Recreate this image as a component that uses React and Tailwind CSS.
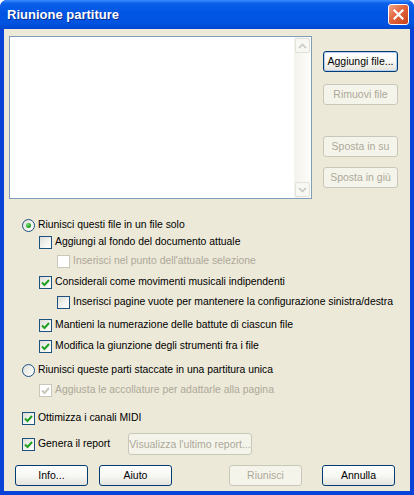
import React from "react";
import clsx from "clsx";

const font = "font-['Liberation_Sans',Arial,sans-serif]";

const Btn = ({ children, disabled, focused, className }) => (
  <div
    className={clsx(
      "h-[21px] w-[73px] flex items-center justify-center rounded-[3px] border text-[10.5px] leading-none",
      disabled
        ? "border-[#C9C7BA] bg-[#F5F4EA] text-[#ACA899]"
        : "border-[#003C74] bg-[linear-gradient(180deg,#FFFFFF_0%,#F6F6F2_55%,#E4E3DC_100%)] text-black",
      focused && "shadow-[inset_0_0_0_1px_#B5CDF0]",
      className
    )}
  >
    {children}
  </div>
);

const Check = ({ checked, disabled }) => (
  <div
    className={clsx(
      "w-[13px] h-[13px] shrink-0 border flex items-center justify-center",
      disabled
        ? "border-[#CAC8BB] bg-white"
        : "border-[#1C5180] bg-[linear-gradient(135deg,#DCDCD7_0%,#F4F4F1_60%,#FFFFFF_100%)]"
    )}
  >
    {checked && (
      <svg width="11" height="11" viewBox="0 0 11 11">
        <polyline
          points="2,5.5 4.5,8 9,3"
          fill="none"
          stroke={disabled ? "#CAC8BB" : "#21A121"}
          strokeWidth="2"
        />
      </svg>
    )}
  </div>
);

const Radio = ({ checked }) => (
  <div className="w-[13px] h-[13px] shrink-0 rounded-full border border-[#1C5180] bg-[linear-gradient(135deg,#DCDCD7_0%,#F4F4F1_60%,#FFFFFF_100%)] flex items-center justify-center">
    {checked && (
      <div className="w-[5px] h-[5px] rounded-full bg-[radial-gradient(circle_at_35%_35%,#7BE07B_0%,#21A121_60%,#1A8A1A_100%)]" />
    )}
  </div>
);

const Row = ({ indent, control, label, disabled, className }) => (
  <div className={clsx("h-[16px] flex items-center", indent, className)}>
    {control}
    <span
      className={clsx(
        "ml-[3px] text-[10.4px] whitespace-nowrap",
        disabled ? "text-[#ACA899]" : "text-black"
      )}
    >
      {label}
    </span>
  </div>
);

const Chevron = ({ up }) => (
  <svg width="9" height="6" viewBox="0 0 9 6">
    <polyline
      points={up ? "1,5 4.5,1.5 8,5" : "1,1 4.5,4.5 8,1"}
      fill="none"
      stroke="#C9C8C0"
      strokeWidth="1.6"
    />
  </svg>
);

export default function App() {
  return (
    <div className={clsx("w-[414px] h-[495px] flex flex-col rounded-t-[7px] bg-[#0842D6] overflow-hidden", font)}>
      {/* title bar */}
      <div className="h-[29px] shrink-0 flex items-center justify-between pl-[7px] pr-[5px] bg-[linear-gradient(180deg,#3A8CFF_0%,#0A5FEA_12%,#0055E3_45%,#0054E0_80%,#0045CF_100%)]">
        <span className="text-white text-[13px] font-bold [text-shadow:1px_1px_0_#0A2D8C]">
          Riunione partiture
        </span>
        <div className="w-[21px] h-[21px] rounded-[3px] border border-white bg-[linear-gradient(135deg,#F0A88A_0%,#E2643D_45%,#C7411B_100%)] flex items-center justify-center">
          <svg width="11" height="11" viewBox="0 0 11 11">
            <path d="M1.5 1.5 L9.5 9.5 M9.5 1.5 L1.5 9.5" stroke="white" strokeWidth="2.2" strokeLinecap="square" />
          </svg>
        </div>
      </div>

      {/* client */}
      <div className="flex-1 mx-[4px] mb-[4px] bg-[#ECE9D8] pt-[7px] pl-[5px] flex flex-col">
        <div className="flex">
          <div className="w-[303px] h-[163px] border border-[#7F9DB9] bg-white flex justify-end">
            <div className="w-[17px] h-full flex flex-col justify-between bg-[linear-gradient(90deg,#F3F2EC_0%,#FDFDFA_100%)] p-[1px]">
              <div className="h-[15px] rounded-[2px] border border-[#E2E1DA] bg-[#F7F7F3] flex items-center justify-center">
                <Chevron up />
              </div>
              <div className="h-[15px] rounded-[2px] border border-[#E2E1DA] bg-[#F7F7F3] flex items-center justify-center">
                <Chevron />
              </div>
            </div>
          </div>
          <div className="ml-[11px] mt-[15px] flex flex-col">
            <Btn focused className="w-[75px]">Aggiungi file...</Btn>
            <Btn disabled className="w-[75px] mt-[12px]">Rimuovi file</Btn>
            <Btn disabled className="w-[75px] mt-[31px]">Sposta in su</Btn>
            <Btn disabled className="w-[75px] mt-[10px]">Sposta in giù</Btn>
          </div>
        </div>

        <div className="flex flex-col mt-[18px]">
          <Row indent="pl-[13px]" control={<Radio checked />} label="Riunisci questi file in un file solo" />
          <Row indent="pl-[30px] mt-[1px]" control={<Check />} label="Aggiungi al fondo del documento attuale" />
          <Row indent="pl-[48px] mt-[3px]" control={<Check disabled />} label="Inserisci nel punto dell'attuale selezione" disabled />
          <Row indent="pl-[30px] mt-[5px]" control={<Check checked />} label="Considerali come movimenti musicali indipendenti" />
          <Row indent="pl-[48px] mt-[4px]" control={<Check />} label="Inserisci pagine vuote per mantenere la configurazione sinistra/destra" />
          <Row indent="pl-[30px] mt-[7px]" control={<Check checked />} label="Mantieni la numerazione delle battute di ciascun file" />
          <Row indent="pl-[30px] mt-[5px]" control={<Check checked />} label="Modifica la giunzione degli strumenti fra i file" />
          <Row indent="pl-[13px] mt-[8px]" control={<Radio />} label="Riunisci queste parti staccate in una partitura unica" />
          <Row indent="pl-[30px] mt-[4px]" control={<Check checked disabled />} label="Aggiusta le accollature per adattarle alla pagina" disabled />
          <Row indent="pl-[13px] mt-[12px]" control={<Check checked />} label="Ottimizza i canali MIDI" />
          <div className="h-[22px] mt-[7px] pl-[13px] flex items-center">
            <Check checked />
            <span className="ml-[3px] text-[10.4px] text-black w-[90px]">Genera il report</span>
            <Btn disabled className="w-[124px] h-[22px]">Visualizza l'ultimo report...</Btn>
          </div>
        </div>

        <div className="flex mt-[10px] pl-[6px]">
          <Btn>Info...</Btn>
          <Btn className="ml-[11px]">Aiuto</Btn>
          <Btn disabled className="ml-[57px]">Riunisci</Btn>
          <Btn className="ml-[20px]">Annulla</Btn>
        </div>
      </div>
    </div>
  );
}
